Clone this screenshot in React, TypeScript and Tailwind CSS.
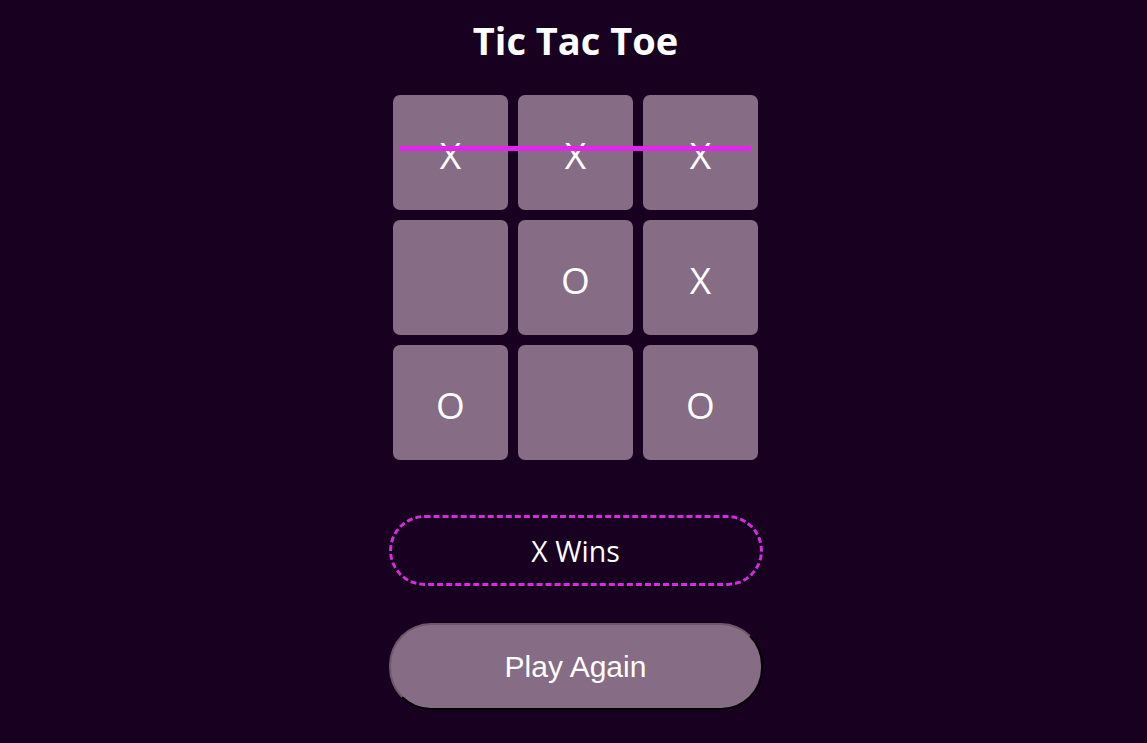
const BOARD: string[] = ["X", "X", "X", "", "O", "X", "O", "", "O"];

export default function App() {
  return (
    <div className="min-h-[743px] w-full bg-[#170020] flex flex-col items-center pl-[4px] font-['Open_Sans',sans-serif] text-white">
      <h1 className="mt-[14px] text-[38px] leading-[52px] font-bold">Tic Tac Toe</h1>

      {/* board */}
      <div className="relative mt-[29px] grid grid-cols-[115px_115px_115px] gap-[10px]">
        {BOARD.map((v, i) => (
          <div
            key={i}
            className="h-[115px] w-[115px] rounded-[7px] bg-[#866c84] flex items-center justify-center pt-[4px] text-[37px] leading-none"
          >
            {v}
          </div>
        ))}
        {/* winning strike */}
        <div className="absolute left-[6px] top-[51px] h-[5px] w-[352px] bg-[#e125ec]" />
      </div>

      <div className="mt-[55px] h-[71px] w-[374px] rounded-full border-[3px] border-dashed border-[#d62ce0] flex items-center justify-center pt-[2px] text-[28.5px]">
        X Wins
      </div>

      <button className="mt-[37px] h-[87px] w-[374px] rounded-[42px] border-2 border-t-[#6b5869] border-l-[#6b5869] border-r-black border-b-black bg-[#866c84] text-[30px] font-['Liberation_Sans',sans-serif] text-white">
        Play Again
      </button>
    </div>
  );
}
